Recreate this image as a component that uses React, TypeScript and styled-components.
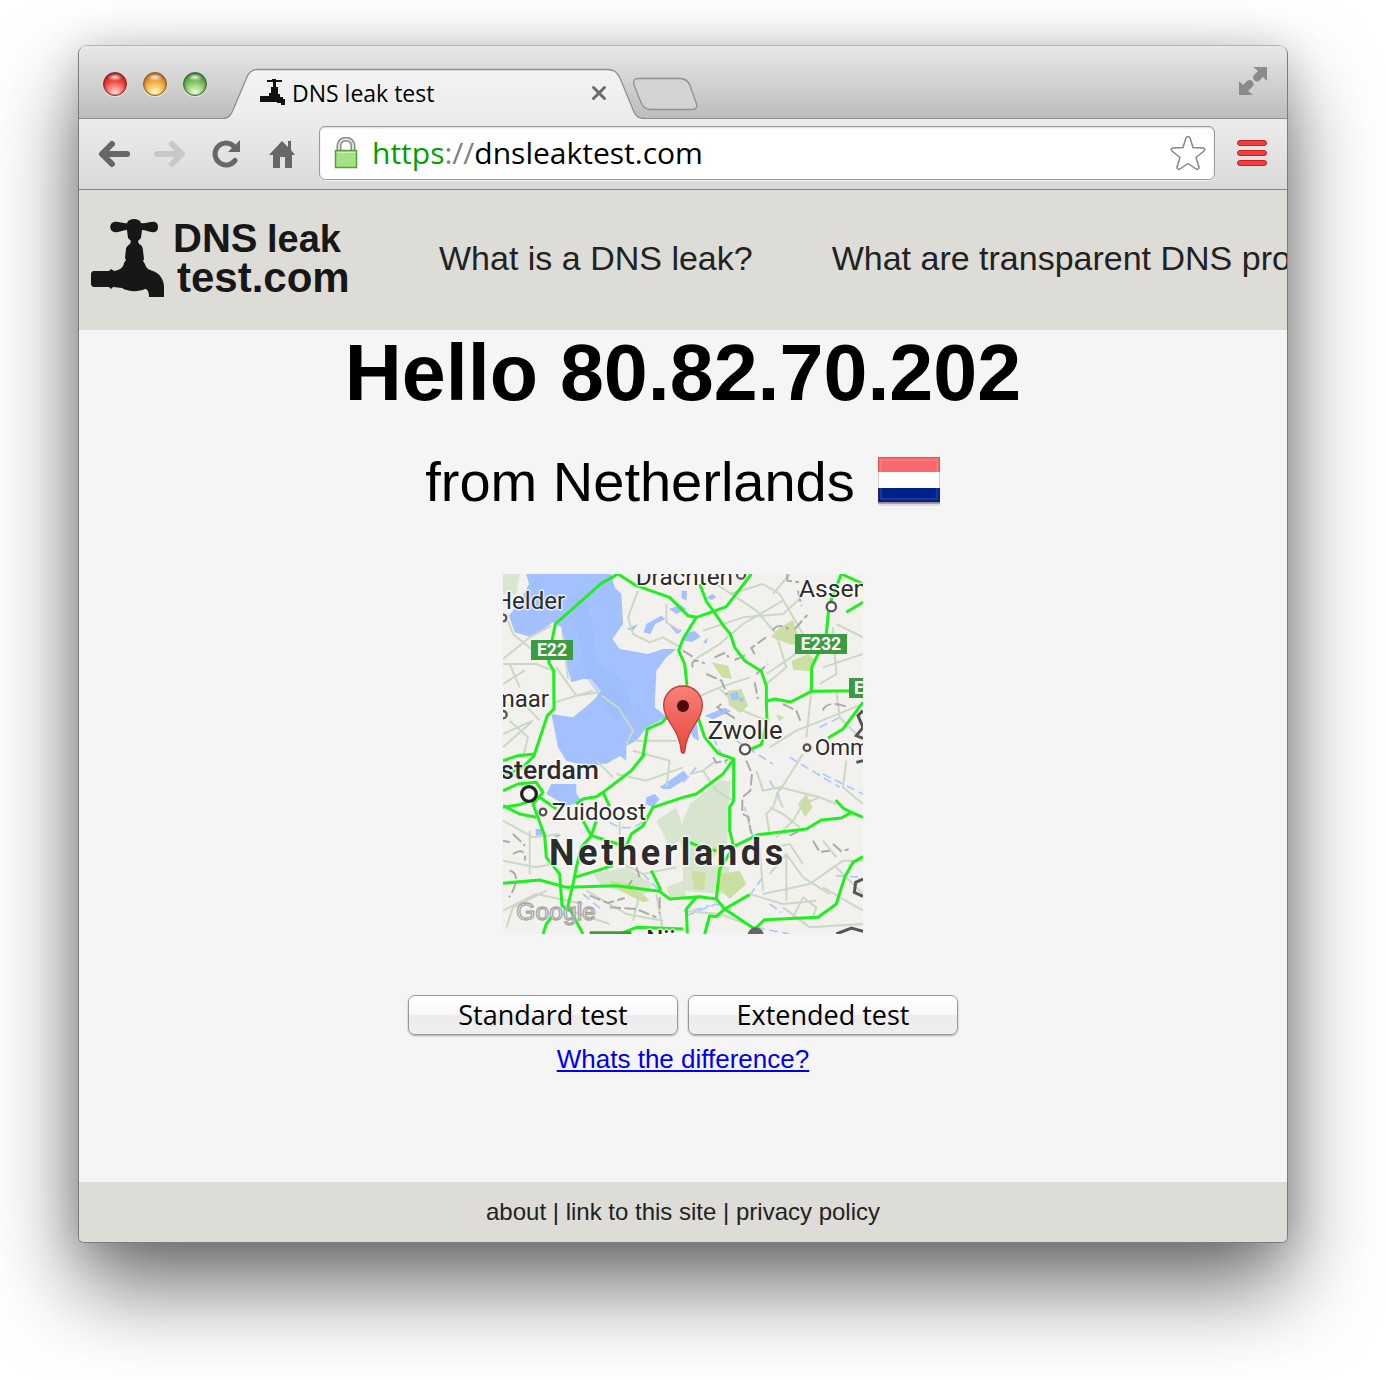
import React from 'react';
import styled, { createGlobalStyle } from 'styled-components';

const ui = '"Open Sans", "Noto Sans", sans-serif';
const sans = '"Liberation Sans", Arial, sans-serif';

const Global = createGlobalStyle`
  * { box-sizing: border-box; }
  body { margin: 0; background: #fff; font-family: ${sans}; color: #000; }
  button { font: inherit; color: inherit; }
`;

const Desktop = styled.div`
  padding: 45px 98px 137px 78px;
  overflow: hidden;
`;

const BrowserWindow = styled.div`
  border: 1px solid #7c7c7c;
  border-top-color: #b4b4b4;
  border-radius: 9px 9px 6px 6px;
  overflow: hidden;
  background: #f5f5f5;
  box-shadow: 0 44px 88px rgba(0, 0, 0, 0.56), 0 4px 40px rgba(0, 0, 0, 0.16);
`;

const TitleBar = styled.div`
  display: flex;
  align-items: flex-end;
  height: 73px;
  padding: 0 18px 0 24px;
  background: linear-gradient(#e8e8e8, #bcbcbc);
  box-shadow: inset 0 -1px #8f8f8f;
`;

const Lights = styled.div`
  display: flex;
  gap: 16px;
  margin-bottom: 23px;
`;

const Light = styled.button<{ $rim: string; $mid: string; $glow: string }>`
  width: 24px;
  height: 24px;
  padding: 0;
  border: 1px solid ${p => p.$rim};
  border-radius: 50%;
  background:
    radial-gradient(ellipse 8px 4px at 50% 4px, rgba(255, 255, 255, 0.85), transparent),
    radial-gradient(circle at 50% 92%, ${p => p.$glow} 0 8%, ${p => p.$mid} 54%, ${p => p.$rim} 110%);
  box-shadow: 0 1px 1px rgba(255, 255, 255, 0.6), inset 0 1px 3px ${p => p.$rim};
`;

const Tab = styled.div`
  position: relative;
  display: flex;
  align-items: center;
  width: 422px;
  height: 51px;
  margin-left: 16px;
  padding: 0 37px 2px 36px;
  font: 23px/30px ${ui};
`;

const TabShape = styled.svg`
  position: absolute;
  inset: 0;
`;

const TabTitle = styled.span`
  position: relative;
  flex: 1;
  margin-left: 7px;
`;

const IconButton = styled.button`
  position: relative;
  display: flex;
  padding: 0;
  border: 0;
  background: none;
`;

const NewTab = styled(IconButton)`
  margin: 0 auto 8px -13px;
`;

const Expand = styled(IconButton)`
  margin-bottom: 22px;
`;

const Toolbar = styled.div`
  display: flex;
  align-items: center;
  height: 71px;
  padding: 0 19px 0 18px;
  background: linear-gradient(#ececec, #dadada);
  border-bottom: 1px solid #848484;
`;

const NavButtons = styled.div`
  display: flex;
  gap: 23px;
  margin-right: 21px;
`;

const Omnibox = styled.label`
  display: flex;
  flex: 1;
  align-items: center;
  height: 54px;
  margin: 0 21px 2px 0;
  padding: 0 8px 0 14px;
  border: 1px solid #9a9a9a;
  border-radius: 6px;
  background: #fff;
  box-shadow: inset 0 1px 2px rgba(0, 0, 0, 0.16), 0 1px rgba(255, 255, 255, 0.6);
`;

const Address = styled.div`
  flex: 1;
  margin-left: 14px;
  font: 30px/38px ${ui};
  color: #000;
`;

const Scheme = styled.span`
  color: #00a000;
`;

const Slashes = styled.span`
  color: #808080;
`;

const SiteHeader = styled.header`
  display: flex;
  align-items: center;
  height: 140px;
  padding-left: 11px;
  background: #dddcd7;
  color: #222;
  overflow: hidden;
`;

const Logo = styled.a`
  display: flex;
  flex: none;
  width: 349px;
  color: #1a1a1a;
`;

const SiteNav = styled.nav`
  display: flex;
  flex: none;
  gap: 79px;
  margin-bottom: 4px;
  white-space: nowrap;
`;

const NavLink = styled.a`
  color: #222;
  font-size: 34px;
  line-height: 40px;
  text-decoration: none;
`;

const Main = styled.main`
  display: flex;
  flex-direction: column;
  align-items: center;
  padding-bottom: 106px;
`;

const Greeting = styled.h1`
  margin: 0;
  font-size: 79px;
  line-height: 86px;
`;

const Origin = styled.p`
  display: flex;
  align-items: center;
  gap: 22px;
  margin: 34px 0 60px;
  font-size: 56px;
  line-height: 64px;
`;

const MapView = styled.svg`
  display: block;
  width: 360px;
  height: 360px;
  background: #f3f1ed;
`;

const Tests = styled.div`
  display: flex;
  gap: 10px;
  margin: 61px 0 7px;
`;

const TestButton = styled.button`
  width: 270px;
  height: 40px;
  padding: 0;
  border: 1px solid #999;
  border-radius: 7px;
  background: linear-gradient(#fff 0%, #f8f8f8 48%, #ebebeb 52%, #f0f0f0 100%);
  box-shadow: 0 1px 2px rgba(0, 0, 0, 0.3);
  font: 27px/38px ${ui};
`;

const Difference = styled.a`
  color: #00e;
  font-size: 26px;
  line-height: 34px;
`;

const Footer = styled.footer`
  height: 60px;
  background: #dddcd7;
  color: #222;
  font-size: 24px;
  line-height: 60px;
  text-align: center;
`;

const FooterLink = styled.a`
  color: #222;
  text-decoration: none;
`;

const FaviconShape = styled.svg`
  position: relative;
  top: -1px;
`;

const LogoShape = styled.svg`
  overflow: visible;
`;

const Favicon = () => (
  <FaviconShape width="26" height="26" viewBox="0 0 26 26" fill="#111" shapeRendering="crispEdges">
    <path d="M8 1h5V0h4v1h6v2h-6v5h2v7h2v3h3v2h2v6h-4v-2h-4v-1H1v-6h9v-3h2V8h2V3H8z" />
  </FaviconShape>
);

const TapLogo = () => (
  <LogoShape width="260" height="84" viewBox="0 0 260 84" fill="#171717" role="img" aria-label="DNS leak test.com">
    <path d="M37 5C38 2 41 1 44 1s6 1 7 4c5 1 9-2 14-1 4 1 4 9 0 10-5 1-9-2-13-2l-1 8-3 3 1 3c3 1 4 4 4 7l1 8-1 2 2 3c1 4 4 6 8 7 6 2 11 8 11 16v10H59c0-6-2-8-4-8-6 3-17 3-23-1l-9-1-2 2-2-2H3l-2-2V55l2-2h16l2-2 3 2c6-1 9-3 10-8l2-3-1-2 1-9c0-2 2-4 4-5l1-3-3-3-1-8c-4 0-8 3-13 2-5-1-5-9 0-10 5-1 9 2 14 1z" />
    <text x="83" y="34" fontFamily={sans} fontSize="40" fontWeight="700">DNS</text>
    <text x="177" y="34" fontFamily={sans} fontSize="38" fontWeight="700">leak</text>
    <text x="87" y="74" fontFamily={sans} fontSize="42" fontWeight="700">test.com</text>
  </LogoShape>
);

const Flag = () => (
  <svg width="64" height="52" viewBox="0 0 64 52" role="img" aria-label="Flag of the Netherlands">
    <rect x="1" y="3" width="62" height="47" rx="2" fill="#000" opacity=".1" />
    <rect x="1" y="2" width="62" height="46" rx="1" fill="#000" opacity=".25" />
    <path d="M1 1h62v15H1z" fill="#f9686c" />
    <path d="M1 16h62v16H1z" fill="#fff" />
    <path d="M1 32h62v14H1z" fill="#00218a" />
    <path d="M4 4h56v39H4z" fill="none" stroke="#fff" strokeWidth="2" opacity=".1" />
    <path d="M1.500 1.500h61v45h-61z" fill="none" stroke="#922" opacity=".25" />
  </svg>
);

/* Road, water and label positions are in map units of a third of a pixel. */
const highways = [
  'M345 0L295 28 157 150 147 200 137 265 152 290 153 405 133 425 93 545 60 580 0 605',
  'M345 0L400 35 500 70 555 125 580 130 632 112 670 98 745 0',
  'M590 30L610 82 632 112 665 160 682 180 695 220 725 260 775 292 790 335 790 385 792 440 775 512 745 525',
  'M580 130L540 195 527 230 545 270 552 335',
  'M420 545L433 465 478 445 492 430M585 430L605 490 645 538 692 555',
  'M790 382L815 375 863 384 925 352 1080 350',
  'M925 352L926 280 945 240 970 180 978 95 1015 0 1080 30',
  'M1080 385L1020 465 975 492',
  'M1030 115L1080 85',
  'M425 540L385 590 300 655 280 668 240 675 220 690',
  'M300 655L320 697 M240 740L265 785 235 820 220 880 210 930 195 995 240 1080',
  'M0 650L45 630 100 625 120 655 90 690 125 785 130 850 170 900 177 995 200 1010',
  'M0 695L50 720 100 730 M0 560L45 545 95 540 M0 700L50 692 110 670 160 705',
  'M280 740L265 785 345 810 370 815 385 780 420 755 450 700 540 670',
  'M540 670L580 660 660 600 692 555 692 680 680 700 680 770 692 818 765 782 910 765 955 738 1015 732 1045 715 1080 730',
  'M1045 715L1020 702 998 678',
  'M215 910L330 875 M0 928L110 918 190 940 340 935 470 952 500 975 590 968 640 975 665 1005 755 1065 785 1037 945 1030 1000 990 1025 910 1050 865 1080 848',
  'M665 1005L740 962 M640 975L650 885 692 818 M445 890L472 945 470 952',
  'M580 970L550 1005 553 1080 M605 1080L620 1025 640 1028 665 1005',
  'M120 1080L130 1050 145 1030 M350 1080L400 1060 540 1065',
  'M560 805L600 822 640 830',
];

const minorRoads = [
  'M0 255L80 190 145 155 M0 270L100 270 150 290 M15 140L30 180 85 225',
  'M20 270L50 340 M0 330L65 290 M160 280L220 365 290 355 M155 385L270 350',
  'M180 180L195 315 M0 480L90 440 M0 520L85 445 M20 440L75 490 60 550 M55 380L110 440',
  'M295 365L345 400 390 470 370 510 M405 50L375 130 390 180 440 205 480 190 540 225',
  'M490 90L490 145 530 170 M570 260L650 210 720 150 840 80',
  'M640 30L760 110 820 180 850 280 790 330 M680 60L780 30 830 60 900 180',
  'M600 170L720 130 840 120 900 65 M560 380L650 340 740 310 M650 345L720 410 790 440',
  'M790 300L850 260 930 200 M925 352L910 490 M990 160L1000 300 950 330 M810 60L860 0',
  'M1000 150L1080 190 M960 280L1080 240 M800 520L880 470 980 430 1080 390 M1000 350L1010 430 1060 480',
  'M400 500L520 500 M390 530L500 560 490 640 M340 600L430 620 540 580',
  'M560 600L600 590 640 560 M600 590L640 650 690 680 M760 590L780 650 830 640 810 700 790 720 800 780',
  'M830 640L950 670 1000 690 M900 540L830 650 M950 670L900 690 870 740 820 790 M1030 560L1020 640 1080 690',
  'M840 700L820 660 M890 760L840 720 800 700 M770 820L780 950 M780 960L920 930 1020 860 1080 860',
  'M800 900L850 840 900 910 980 960 M850 840L850 980 M960 800L1000 850 M810 820L860 810 900 870 M740 960L840 990 940 980',
  'M0 740L90 790 170 780 M80 770L80 900 M0 860L100 880 150 870',
  'M130 950L30 1000 10 1060 M0 1010L100 960 240 990 M360 870L420 900 520 880',
  'M200 1010L320 1050 M250 950L370 1020 480 1040 M410 960L390 1040 M460 960L480 1070',
  'M540 1010L650 1020 780 1070 M840 1000L920 1060 1080 1050 M870 1030L900 970 940 1000 930 1030',
  'M350 740L350 800 M280 560L330 610 M1000 880L1080 960 M960 940L1080 1010',
];

const borders = [
  'M540 230l35 22M570 280c-12-26 24-22 35-10M610 300l45 20 18 42M635 250l32-14 10 14M695 258l32-14M755 240l-10-18 44-32M810 170c6-18 36-18 46-4M875 165l38-42M885 50l10 45M755 325l10 50M655 390l-12 10 60 38M760 300l35-30M840 390l40 20 12 30M960 410c5-25 45-25 75-10M853 0l0 20 35 5',
  'M630 550l10 16 35-8M730 560l17 40-5 50-24 20 0 50 18 8 8 50M860 785l25-12M930 800l20 34 30-4M990 810l25 22 22-6',
  'M30 780l36 35M0 800l20 5M30 840c25-15 40-8 35 20M20 890c30 5 20 50-2 80M260 965l55 22 50-15M375 940l12-22M400 880l10 30M470 970v48M320 1000l80 5 60 25',
];

const greens = [
  'M825 165l45-28 16 50 20 25-40 0-62-22z', 'M866 260l50-20 24 22-20 30-50-5z',
  'M625 265l50 10 12 40-30-5z', 'M675 350l40-5 20 50-24 22-34-25z', 'M820 420l24 10-16 12z',
  'M885 690l25-30 18 40-22 30z', 'M320 920l70 10 50 50-20 5-90-45z', 'M565 890l44 5-6 52-30 0z', 'M650 900l60-10 20 40-50 45-40-40z',
];

const softGreens = [
  'M560 690l90-70 32 0 -10 190-60 60-70-10-12-60 10-60z', 'M540 860l140 20-20 80-120-10z', 'M460 740l60-40 30 90-50 30z', 'M270 900l100-20 80 50-20 30-130-20z', 'M490 940l50-20 10 50-50 0z',
  'M0 0h50l-10 60-40 0z',
];

const waters = [
  'M70 0H325L335 40 355 60 360 150 328 195 350 225 435 240 480 225 520 225 490 250 460 290 455 400 492 430 432 460 400 500 370 515 370 560 350 545 310 570 190 560 165 520 145 420 210 430 270 380 295 350 265 315 240 315 205 325 190 270 175 160 150 145 85 190 35 175 18 125 55 75 78 30z',
  'M175 535h190l-20 15-75 30-75-18z', 'M145 630l75 0 0 30 20 25-50 10-60-35z',
  'M370 165l35-15-15 20zM430 150l45-25 12 10-30 15-15 30-20-5zM498 105l35-12 18 12-30 15zM500 155l38 14-15 12z',
  'M470 640l72-50 15 20-55 35-22 0zM430 670l25-10 15 15-20 25-22-10z',
  'M545 180l30-10 18 18-25 15-28-3zM610 70l20-10 10 10-15 8zM600 205l15-15-5 20zM536 50l15 0 0 30-15-8z',
  'M680 360l24-8 5 20-20 10zM705 375l20-5-8 15zM605 425l60-24 20 10-55 25zM560 450l20-10 8 60-16-8-12-20z',
  'M98 765l20 0 0 18-20 2zM150 780l24 4-14 8z',
];

const streams = [
  'M320 745q55 35 105-5M540 625l40-45M740 965l35-50M800 990l35 25M750 790l-25-90M800 620l30 50M630 490l40 80M700 500l110 70M860 550l150 90M960 600l120 60M0 570l50 50M240 960l60 50M550 1025l90-35 50 35M1000 905l80 5M570 1010l50-15M420 900l60 60M270 100l-20 40M950 460l60-30M760 1060l100 20',
];

type LabelProps = { x: number; y: number; size: number; weight?: number; spacing?: number; children: string };

const MapLabel = ({ x, y, size, weight = 400, spacing, children }: LabelProps) => (
  <text
    x={x}
    y={y}
    fontSize={size}
    fontWeight={weight}
    fontFamily="Roboto, sans-serif"
    letterSpacing={spacing}
    fill="#2c2c2c"
    stroke="#fff"
    strokeWidth="9"
    strokeOpacity=".7"
    strokeLinejoin="round"
    paintOrder="stroke"
  >
    {children}
  </text>
);

type ShieldProps = { x: number; y: number; w: number; children: string };

const Shield = ({ x, y, w, children }: ShieldProps) => (
  <g>
    <rect x={x} y={y} width={w} height="60" fill="#3b9b40" />
    <text x={x + w / 2} y={y + 48} textAnchor="middle" fontFamily="Roboto, sans-serif" fontSize="53" fontWeight="700" fill="#fff">{children}</text>
  </g>
);

const draw = (list: string[]) => list.map(d => <path key={d} d={d} />);

const NetherlandsMap = () => (
  <MapView viewBox="0 0 1080 1080" role="img" aria-label="Map of the Netherlands">
    <defs>
      <linearGradient id="pin" x2="0" y2="1">
        <stop offset="0" stopColor="#f98078" />
        <stop offset="1" stopColor="#e5463f" />
      </linearGradient>
    </defs>
    <g fill="#d3e4ca" opacity=".85">{draw(softGreens)}</g>
    <g fill="#cbdfa3">{draw(greens)}</g>
    <g fill="#a2c1fe">{draw(waters)}</g>
    <path d="M200 60l60 40 20 160 80 60 30 90-60 20-80-120-20-110z" fill="#98b9fb" opacity=".5" />
    <g fill="none" stroke="#a9c8fb" strokeWidth="5" strokeDasharray="26 14">{draw(streams)}</g>
    <g fill="none" stroke="#c9d9c3" strokeWidth="6" strokeLinejoin="round">{draw(minorRoads)}</g>
    <g fill="none" stroke="#ababab" strokeWidth="6" strokeDasharray="34 10">{draw(borders)}</g>
    <g fill="none" stroke="#1df01d" strokeWidth="9" strokeLinejoin="round">{draw(highways)}</g>
    <g fill="#fff" stroke="#555" strokeWidth="7">
      <circle cx="0" cy="132" r="10" />
      <circle cx="0" cy="422" r="11" />
      <circle cx="714" cy="2" r="12" />
      <circle cx="985" cy="98" r="14" />
      <circle cx="726" cy="526" r="15" />
      <circle cx="912" cy="521" r="10" />
      <circle cx="120" cy="714" r="10" />
      <circle cx="78" cy="660" r="22" stroke="#222" strokeWidth="10" />
    </g>
    <g fill="none" stroke="#555" strokeWidth="9">
      <path d="M1080 915l-22 10-4 30 26 12M1000 1080l45-18 35 10M1080 410l-15 15 15 35-20 25 20 8M1080 560l-20 5" />
    </g>
    <Shield x={84} y={198} w={126}>E22</Shield>
    <Shield x={876} y={180} w={156}>E232</Shield>
    <Shield x={1038} y={312} w={60}>E</Shield>
    <path d="M260 1072h125v8H260z" fill="#3b9b40" />
    <MapLabel x={-24} y={104} size={72}>Helder</MapLabel>
    <MapLabel x={398} y={32} size={73}>Drachten</MapLabel>
    <MapLabel x={888} y={68} size={74}>Assen</MapLabel>
    <MapLabel x={-28} y={398} size={72}>maar</MapLabel>
    <MapLabel x={614} y={494} size={77}>Zwolle</MapLabel>
    <MapLabel x={935} y={542} size={68}>Ommen</MapLabel>
    <MapLabel x={-8} y={616} size={80} weight={500}>sterdam</MapLabel>
    <MapLabel x={146} y={738} size={72}>Zuidoost</MapLabel>
    <MapLabel x={138} y={874} size={108} weight={700} spacing={11}>Netherlands</MapLabel>
    <text x="40" y="1038" fontFamily={sans} fontSize="74" fill="#fff" fillOpacity=".4" stroke="#a5a5a5" strokeWidth="4">Google</text>
    <MapLabel x={430} y={1118} size={72} weight={500}>Nijm</MapLabel>
    <circle cx="758" cy="1084" r="24" fill="#666" />
    <path d="M540 336c-34 0-58 26-58 58 0 48 48 68 53 140q5 8 10 0c5-72 53-92 53-140 0-32-24-58-58-58z" fill="url(#pin)" stroke="#b8403a" strokeWidth="4" />
    <circle cx="540" cy="396" r="18" fill="#4a0c0a" />
  </MapView>
);

const App = () => (
  <>
    <Global />
    <Desktop>
      <BrowserWindow>
        <TitleBar>
          <Lights>
            <Light aria-label="Close" $rim="#8c1f1e" $mid="#f2433f" $glow="#ffc9c2" />
            <Light aria-label="Minimize" $rim="#94581a" $mid="#f3a63c" $glow="#fff3b0" />
            <Light aria-label="Zoom" $rim="#33692c" $mid="#79bd5a" $glow="#e0f7c8" />
          </Lights>
          <Tab>
            <TabShape width="422" height="51" viewBox="0 0 422 51">
              <defs>
                <linearGradient id="tab" x2="0" y2="1">
                  <stop offset="0" stopColor="#f3f3f3" />
                  <stop offset="1" stopColor="#ececec" />
                </linearGradient>
              </defs>
              <path d="M0 51V50.500C6 50 8 47 10 42L24 9C26 4 29 1.500 34 1.500H384C391 1.500 394 4 397 10L411 44C413 48 415 50.500 422 50.500V51z" fill="url(#tab)" />
              <path d="M0 50.500C6 50 8 47 10 42L24 9C26 4 29 1.500 34 1.500H384C391 1.500 394 4 397 10L411 44C413 48 415 50.500 422 50.500" fill="none" stroke="#8f8f8f" strokeWidth="1.300" />
            </TabShape>
            <Favicon />
            <TabTitle>DNS leak test</TabTitle>
            <IconButton aria-label="Close tab">
              <svg width="18" height="18" viewBox="0 0 18 18" stroke="#6b6b6b" strokeWidth="3" strokeLinecap="round">
                <path d="M3.500 3.500l11 11M14.500 3.500l-11 11" />
              </svg>
            </IconButton>
          </Tab>
          <NewTab aria-label="New tab">
            <svg width="66" height="34" viewBox="0 0 66 34">
              <path d="M6 1.500H48c5 0 8 2 10 7l6 17c2 5 0 7-4 7H19c-5 0-8-2-10-7L2 8C1 4 2 1.500 6 1.500z" fill="#d2d3d5" stroke="#919191" strokeWidth="1.300" />
            </svg>
          </NewTab>
          <Expand aria-label="Full screen">
            <svg width="32" height="32" viewBox="0 0 32 32" fill="#8b8b8b">
              <path d="M16 2h14v14l-4-4-4 4c-3 2-8-2-5-6l4-4zM2 30V16l4 4 4-4c4-3 8 2 6 5l-5 5 5 4z" />
            </svg>
          </Expand>
        </TitleBar>
        <Toolbar>
          <NavButtons>
            <IconButton aria-label="Back">
              <svg width="34" height="32" viewBox="0 0 34 32" fill="none" stroke="#676767" strokeWidth="6" strokeLinecap="round" strokeLinejoin="round">
                <path d="M30 16H6" /><path d="M15 6L5 16l10 10" />
              </svg>
            </IconButton>
            <IconButton aria-label="Forward" disabled>
              <svg width="34" height="32" viewBox="0 0 34 32" fill="none" stroke="#c8c8c8" strokeWidth="6" strokeLinecap="round" strokeLinejoin="round">
                <path d="M3 16h24" /><path d="M18 6l10 10-10 10" />
              </svg>
            </IconButton>
            <IconButton aria-label="Reload">
              <svg width="32" height="32" viewBox="0 0 32 32">
                <path d="M24 22.500A11 11 0 1 1 22 7.500" fill="none" stroke="#676767" strokeWidth="5" strokeLinecap="round" />
                <path d="M29 2v12H17z" fill="#676767" />
              </svg>
            </IconButton>
            <IconButton aria-label="Home">
              <svg width="32" height="32" viewBox="0 0 32 32" fill="#676767">
                <path d="M16 3l6 6V3h3v9l4 5h-3v13h-7V19h-5v11H7V17H3z" />
              </svg>
            </IconButton>
          </NavButtons>
          <Omnibox>
            <svg width="24" height="32" viewBox="0 0 24 32">
              <path d="M5 14V9c0-9 14-9 14 0v5" fill="none" stroke="#8d8d8d" strokeWidth="5" />
              <path d="M5 14V9c0-9 14-9 14 0v5" fill="none" stroke="#e0e0e0" strokeWidth="2" />
              <rect x="1.500" y="13.500" width="21" height="17" fill="#a6e283" stroke="#55a03c" strokeWidth="1.500" />
              <path d="M3 15.500h18" stroke="#cdf5b3" />
            </svg>
            <Address>
              <Scheme>https</Scheme><Slashes>://</Slashes>dnsleaktest.com
            </Address>
            <IconButton aria-label="Bookmark">
              <svg width="36" height="36" viewBox="0 0 36 36" fill="#fff" stroke="#858585" strokeWidth="1.500" strokeLinejoin="round">
                <path d="M16 3Q18 0 20 3L23 12.500 33 13Q36 14 34 16L26 22.500 29 32Q29 35 26 34L18 28.500 10 34Q7 35 7 32L10 22.500 2 16Q0 14 3 13L13 12.500z" />
              </svg>
            </IconButton>
          </Omnibox>
          <IconButton aria-label="Menu">
            <svg width="32" height="28" viewBox="0 0 32 28">
              <g fill="#f03e3e" stroke="#cf1d1d">
                <rect x="1.500" y=".5" width="29" height="5" rx="2.500" />
                <rect x="1.500" y="10.500" width="29" height="5" rx="2.500" />
                <rect x="1.500" y="20.500" width="29" height="5" rx="2.500" />
              </g>
            </svg>
          </IconButton>
        </Toolbar>
        <SiteHeader>
          <Logo href="#"><TapLogo /></Logo>
          <SiteNav>
            <NavLink href="#">What is a DNS leak?</NavLink>
            <NavLink href="#">What are transparent DNS proxies?</NavLink>
          </SiteNav>
        </SiteHeader>
        <Main>
          <Greeting>Hello 80.82.70.202</Greeting>
          <Origin>from Netherlands <Flag /></Origin>
          <NetherlandsMap />
          <Tests>
            <TestButton>Standard test</TestButton>
            <TestButton>Extended test</TestButton>
          </Tests>
          <Difference href="#">Whats the difference?</Difference>
        </Main>
        <Footer>
          <FooterLink href="#">about</FooterLink> | <FooterLink href="#">link to this site</FooterLink> | <FooterLink href="#">privacy policy</FooterLink>
        </Footer>
      </BrowserWindow>
    </Desktop>
  </>
);

export default App;
